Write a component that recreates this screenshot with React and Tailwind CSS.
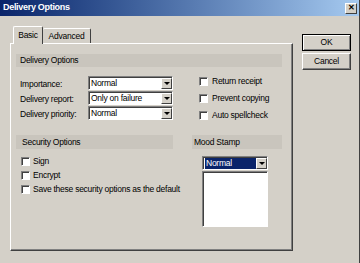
import { useState } from 'react';

const FONT = "font-['Liberation_Sans',Arial,sans-serif]";

function Checkbox({ label }) {
  return (
    <div className="flex items-center gap-[3px]">
      <span className="w-[9px] h-[9px] shrink-0 bg-white border-t border-l border-[#808080] border-b border-r border-b-white border-r-white shadow-[inset_1px_1px_0_#404040]" />
      <span>{label}</span>
    </div>
  );
}

function Select({ value, width, selected }) {
  return (
    <div
      className={`flex h-[14px] bg-white border-t border-l border-[#808080] border-b border-r border-b-white border-r-white shadow-[inset_1px_1px_0_#404040] ${width}`}
    >
      <div className="flex-1 flex items-center pl-[2px] pt-px">
        <span className={selected ? 'bg-[#0a246a] text-white pl-px pr-[24px] leading-[11px]' : 'leading-[11px]'}>{value}</span>
      </div>
      <div className="w-[11px] mt-px bg-[#d4d0c8] border-t border-l border-white border-b border-r border-b-[#404040] border-r-[#404040] flex items-center justify-center">
        <span className="w-0 h-0 border-l-[3px] border-r-[3px] border-t-[3px] border-l-transparent border-r-transparent border-t-black" />
      </div>
    </div>
  );
}

export default function App() {
  const [tab] = useState('basic');

  return (
    <div className={`w-[360px] h-[263px] bg-[#d4d0c8] flex flex-col border-r border-[#404040] overflow-hidden whitespace-nowrap text-[8.5px] tracking-[-0.25px] text-black ${FONT}`}>
      {/* TITLE BAR */}
      <div className="h-[16px] shrink-0 bg-gradient-to-r from-[#0a246a] to-[#a6caf0] flex items-center justify-between pl-[3px] pr-[2px]">
        <span className="text-white font-bold text-[9px] tracking-[-0.3px]">Delivery Options</span>
        <button className="w-[12px] h-[11px] bg-[#d4d0c8] border-t border-l border-white border-b border-r border-b-[#404040] border-r-[#404040] flex items-center justify-center text-[8px] font-bold leading-none tracking-normal">
          ✕
        </button>
      </div>

      <div className="flex flex-1 pl-[10px] pt-[11px]">
        {/* TABS + PANEL */}
        <div className="w-[283px] flex flex-col">
          <div className="flex items-end h-[17px] pl-[3px] -mb-px relative z-10">
            <div className={`w-[30px] h-[18px] bg-[#d4d0c8] border-t border-l border-white border-r border-r-[#404040] rounded-t-[2px] flex items-center justify-center ${tab === 'basic' ? 'text-black' : ''}`}>
              Basic
            </div>
            <div className="w-[48px] h-[15px] bg-[#d4d0c8] border-t border-white border-r border-r-[#404040] rounded-t-[2px] flex items-center justify-center mb-px">
              Advanced
            </div>
          </div>

          <div className="h-[208px] border-t border-l border-white border-r border-b border-r-[#404040] border-b-[#404040] shadow-[inset_-1px_-1px_0_#808080] pl-[5px] pt-[10px]">
            {/* DELIVERY OPTIONS */}
            <div className="h-[13px] w-[266px] bg-[#c9c5bd] flex items-center pl-[4px]">Delivery Options</div>
            <div className="flex mt-[9px]">
              <div className="flex flex-col pl-[4px]">
                {[
                  ['Importance:', 'Normal'],
                  ['Delivery report:', 'Only on failure'],
                  ['Delivery priority:', 'Normal'],
                ].map(([label, value]) => (
                  <div key={label} className="flex items-start h-[15px]">
                    <span className="w-[68px] pt-[2px]">{label}</span>
                    <Select value={value} width="w-[85px]" />
                  </div>
                ))}
              </div>
              <div className="flex flex-col ml-[26px]">
                {['Return receipt', 'Prevent copying', 'Auto spellcheck'].map((l) => (
                  <div key={l} className="h-[17px] flex items-start">
                    <div className="flex items-center gap-[4px] h-[10px]">
                      <span className="w-[9px] h-[9px] bg-white border-t border-l border-[#808080] border-b border-r border-b-white border-r-white shadow-[inset_1px_1px_0_#404040]" />
                      <span>{l}</span>
                    </div>
                  </div>
                ))}
              </div>
            </div>

            <div className="flex mt-[8px]">
              {/* SECURITY OPTIONS */}
              <div className="w-[157px] flex flex-col">
                <div className="h-[14px] bg-[#c9c5bd] flex items-center pl-[6px]">Security Options</div>
                <div className="flex flex-col mt-[5px] pl-[5px]">
                  {['Sign', 'Encrypt', 'Save these security options as the default'].map((l) => (
                    <div key={l} className="h-[14px] flex items-center">
                      <Checkbox label={l} />
                    </div>
                  ))}
                </div>
              </div>

              {/* MOOD STAMP */}
              <div className="w-[90px] ml-[19px] flex flex-col">
                <div className="h-[14px] bg-[#c9c5bd] flex items-center pl-[2px]">Mood Stamp</div>
                <div className="ml-[10px] mt-[7px] flex flex-col gap-px">
                  <Select value="Normal" width="w-[66px]" selected />
                  <div className="w-[66px] h-[56px] bg-white border-t border-l border-[#808080] border-b border-r border-b-white border-r-white shadow-[inset_1px_1px_0_#404040]" />
                </div>
              </div>
            </div>
          </div>
        </div>

        {/* BUTTONS */}
        <div className="flex flex-col gap-[2px] ml-[9px] pt-[7px]">
          <button className="w-[49px] h-[17px] border border-black bg-[#d4d0c8] shadow-[inset_1px_1px_0_#fff,inset_-1px_-1px_0_#808080] flex items-center justify-center">
            OK
          </button>
          <button className="w-[49px] h-[17px] bg-[#d4d0c8] border-t border-l border-white border-b border-r border-b-[#404040] border-r-[#404040] shadow-[inset_-1px_-1px_0_#808080] flex items-center justify-center">
            Cancel
          </button>
        </div>
      </div>
    </div>
  );
}
